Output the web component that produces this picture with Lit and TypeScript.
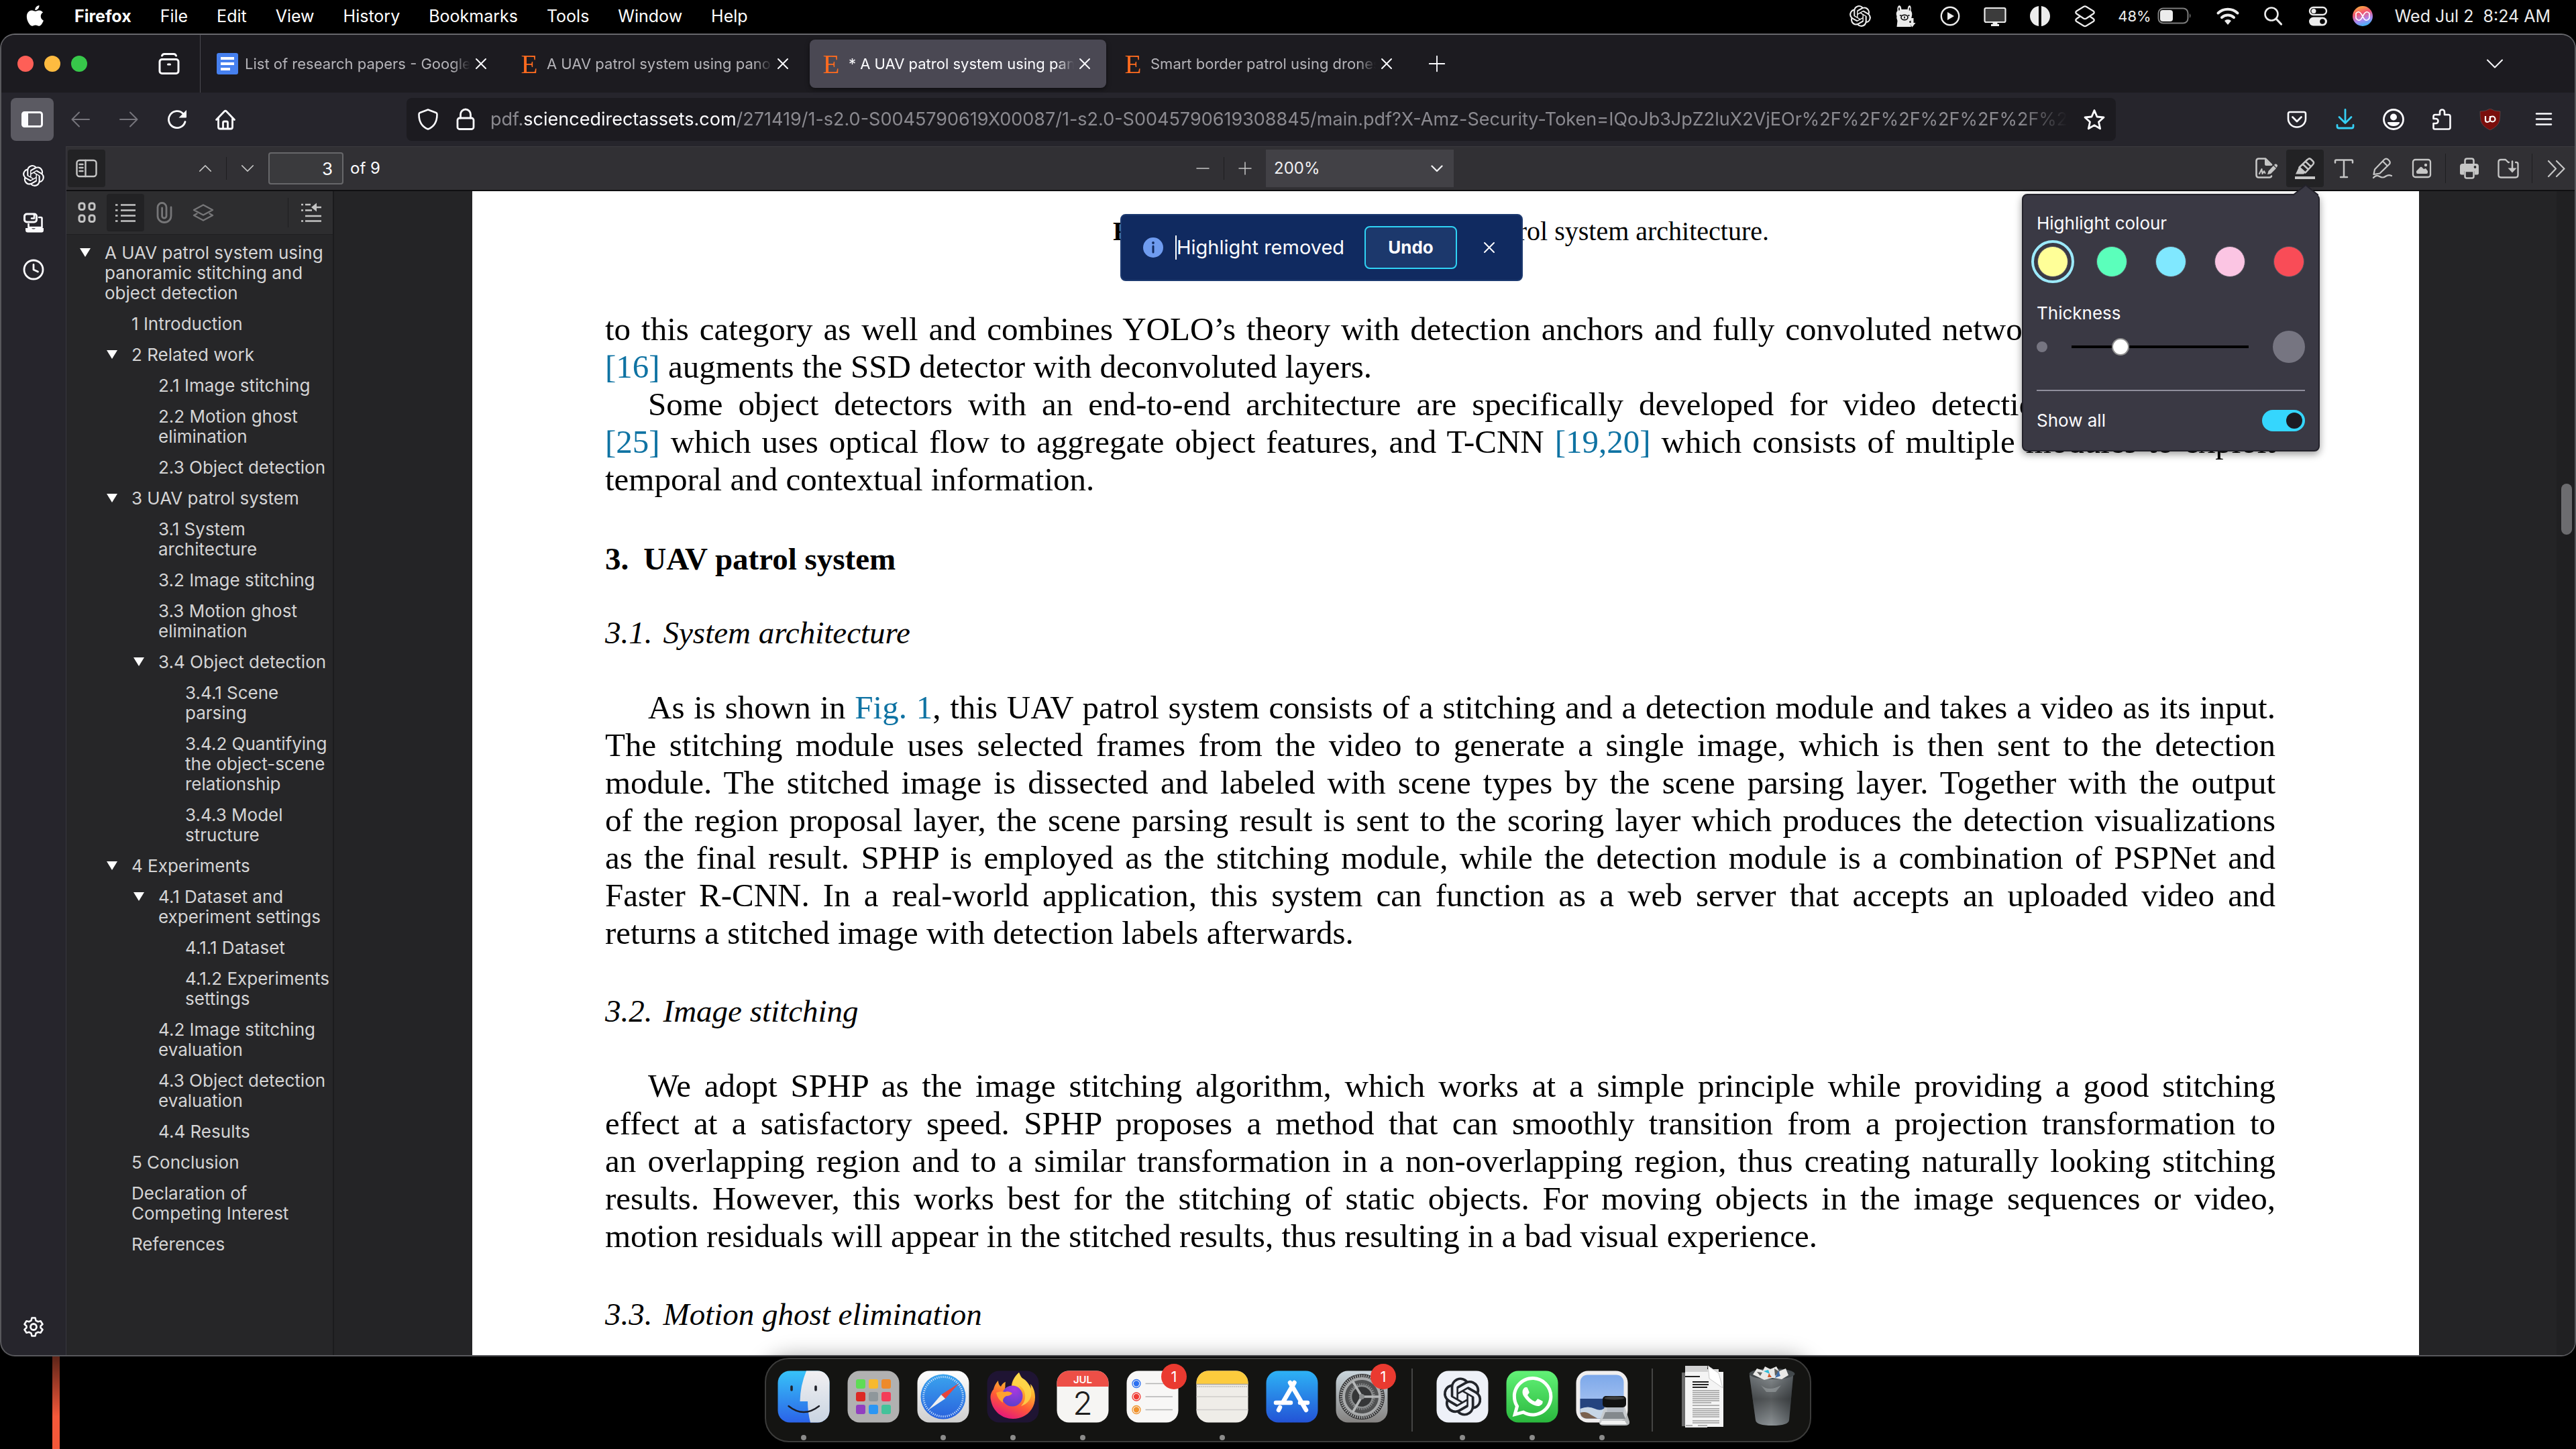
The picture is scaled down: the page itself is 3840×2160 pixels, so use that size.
import { LitElement, html, svg, css, nothing, TemplateResult, SVGTemplateResult } from "lit";
import { customElement } from "lit/decorators.js";
import { classMap } from "lit/directives/class-map.js";

const OPENAI = "M22.2819 9.8211a5.9847 5.9847 0 0 0-.5157-4.9108 6.0462 6.0462 0 0 0-6.5098-2.9A6.0651 6.0651 0 0 0 4.9807 4.1818a5.9847 5.9847 0 0 0-3.9977 2.9 6.0462 6.0462 0 0 0 .7427 7.0966 5.98 5.98 0 0 0 .511 4.9107 6.051 6.051 0 0 0 6.5146 2.9001A5.9847 5.9847 0 0 0 13.2599 24a6.0557 6.0557 0 0 0 5.7718-4.2058 5.9894 5.9894 0 0 0 3.9977-2.9001 6.0557 6.0557 0 0 0-.7475-7.0729zm-9.022 12.6081a4.4755 4.4755 0 0 1-2.8764-1.0408l.1419-.0804 4.7783-2.7582a.7948.7948 0 0 0 .3927-.6813v-6.7369l2.02 1.1686a.071.071 0 0 1 .038.052v5.5826a4.504 4.504 0 0 1-4.4945 4.4944zm-9.6607-4.1254a4.4708 4.4708 0 0 1-.5346-3.0137l.142.0852 4.783 2.7582a.7712.7712 0 0 0 .7806 0l5.8428-3.3685v2.3324a.0804.0804 0 0 1-.0332.0615L9.74 19.9502a4.4992 4.4992 0 0 1-6.1408-1.6464zM2.3408 7.8956a4.485 4.485 0 0 1 2.3655-1.9728V11.6a.7664.7664 0 0 0 .3879.6765l5.8144 3.3543-2.0201 1.1685a.0757.0757 0 0 1-.071 0l-4.8303-2.7865A4.504 4.504 0 0 1 2.3408 7.872zm16.5963 3.8558L13.1038 8.364 15.1192 7.2a.0757.0757 0 0 1 .071 0l4.8303 2.7913a4.4944 4.4944 0 0 1-.6765 8.1042v-5.6772a.79.79 0 0 0-.407-.667zm2.0107-3.0231l-.142-.0852-4.7735-2.7818a.7759.7759 0 0 0-.7854 0L9.409 9.2297V6.8974a.0662.0662 0 0 1 .0284-.0615l4.8303-2.7866a4.4992 4.4992 0 0 1 6.6802 4.66zM8.3065 12.863l-2.02-1.1638a.0804.0804 0 0 1-.038-.0567V6.0742a4.4992 4.4992 0 0 1 7.3757-3.4537l-.142.0805L8.704 5.459a.7948.7948 0 0 0-.3927.6813zm1.0976-2.3654l2.602-1.4998 2.6069 1.4998v2.9994l-2.5974 1.4997-2.6067-1.4997Z";
const APPLE = "M12.152 6.896c-.948 0-2.415-1.078-3.96-1.04-2.04.027-3.91 1.183-4.961 3.014-2.117 3.675-.546 9.103 1.519 12.09 1.013 1.454 2.208 3.09 3.792 3.039 1.52-.065 2.09-.987 3.935-.987 1.831 0 2.35.987 3.96.948 1.637-.026 2.676-1.48 3.676-2.948 1.156-1.688 1.636-3.325 1.662-3.415-.039-.013-3.182-1.221-3.22-4.857-.026-3.04 2.48-4.494 2.597-4.559-1.429-2.09-3.623-2.324-4.39-2.376-2-.156-3.675 1.09-4.61 1.09zM15.53 3.83c.843-1.012 1.4-2.427 1.245-3.83-1.207.052-2.662.805-3.532 1.818-.78.896-1.454 2.338-1.273 3.714 1.338.104 2.715-.688 3.559-1.701";
const WHATSAPP = "M17.472 14.382c-.297-.149-1.758-.867-2.03-.967-.273-.099-.471-.148-.67.15-.197.297-.767.966-.94 1.164-.173.199-.347.223-.644.075-.297-.15-1.255-.463-2.39-1.475-.883-.788-1.48-1.761-1.653-2.059-.173-.297-.018-.458.13-.606.134-.133.298-.347.446-.52.149-.174.198-.298.298-.497.099-.198.05-.371-.025-.52-.075-.149-.669-1.612-.916-2.207-.242-.579-.487-.5-.669-.51-.173-.008-.371-.01-.57-.01-.198 0-.52.074-.792.372-.272.297-1.04 1.016-1.04 2.479 0 1.462 1.065 2.875 1.213 3.074.149.198 2.096 3.2 5.077 4.487.709.306 1.262.489 1.694.625.712.227 1.36.195 1.871.118.571-.085 1.758-.719 2.006-1.413.248-.694.248-1.289.173-1.413-.074-.124-.272-.198-.57-.347m-5.421 7.403h-.004a9.87 9.87 0 01-5.031-1.378l-.361-.214-3.741.982.998-3.648-.235-.374a9.86 9.86 0 01-1.51-5.26c.001-5.45 4.436-9.884 9.888-9.884 2.64 0 5.122 1.03 6.988 2.898a9.825 9.825 0 012.893 6.994c-.003 5.45-4.437 9.884-9.885 9.884m8.413-18.297A11.815 11.815 0 0012.05 0C5.495 0 .16 5.335.157 11.892c0 2.096.547 4.142 1.588 5.945L.057 24l6.305-1.654a11.882 11.882 0 005.683 1.448h.005c6.554 0 11.89-5.335 11.893-11.893a11.821 11.821 0 00-3.48-8.413Z";

/** Line icons on a 32-unit grid, stroked in the current colour. */
const glyphs: Record<string, SVGTemplateResult> = {
  apple: svg`<path transform="translate(1 0) scale(1.28)" fill="currentColor" stroke="none" d=${APPLE}/>`,
  openai: svg`<path transform="scale(1.33)" fill="currentColor" stroke="none" d=${OPENAI}/>`,
  llama: svg`<path fill="currentColor" stroke="none" d="M7 0q3 0 3.500 6h9Q20 0 23 0q2.500 2 1.500 8 2.500 3 1.500 7.500-1 3.500-1 7L22 24l3 8H3.500l1-9q-2-4-1-7-2-4.500 1-8-1-6 2.500-8z"/><g stroke="#000" stroke-width="1.600"><ellipse cx="15" cy="18" rx="5" ry="3.800"/><path d="M8.500 15h1.500M20.500 15h1.500M15 17v2M7 4v3M22.500 4v3"/></g><path stroke-width="4" stroke-linecap="butt" d="M26.500 19v8"/><path fill="currentColor" stroke="none" d="M21.500 26h10l-5 6.500z"/>`,
  play: svg`<circle cx="16" cy="16" r="13.200" stroke-width="2.400"/><path fill="currentColor" stroke="none" d="M12 10v12l10-6z"/>`,
  display: svg`<rect x=".5" y="4" width="31" height="21" rx="2" fill="#3c3c3c" stroke-width="2.200"/><path fill="currentColor" stroke="none" d="M12.500 25h7v3h2.500v3H10v-3h2.500z"/>`,
  halves: svg`<path fill="currentColor" stroke="none" d="M14 1v30C6 30 1 23 1 16S6 2 14 1zM18 1v30c8-1 13-8 13-15S26 2 18 1z"/>`,
  stack: svg`<path stroke-width="2.300" d="M14 2 3.500 8.500q-2.500 2 0 4L14 19.500q2 1.200 4 0l10.500-7q2.500-2 0-4L18 2q-2-1.200-4 0zM8.500 16.500 3.500 20q-2.500 2 0 4L14 30.500q2 1.200 4 0L28.500 24q2.500-2 0-4l-5-3.500"/>`,
  wifi: svg`<g stroke-width="4"><path d="M1.500 11.500a21 21 0 0 1 29 0"/><path d="M7 18a13 13 0 0 1 18 0"/></g><path fill="currentColor" stroke="none" d="M11 23a7 7 0 0 1 10 0l-5 6z"/>`,
  search: svg`<circle cx="14" cy="13" r="9.500" stroke-width="2.600"/><path stroke-width="3.200" d="m21 20 7.500 8"/>`,
  control: svg`<rect x="4" y="3" width="25" height="11" rx="5.500" stroke-width="2.400"/><circle cx="10" cy="8.500" r="3.500" fill="currentColor" stroke="none"/><rect x="3" y="17.500" width="27" height="13" rx="6.500" fill="currentColor" stroke="none"/><circle cx="23" cy="24" r="3.800" fill="#000" stroke="none"/>`,
  box: svg`<g stroke-width="3"><rect x="2" y="9.500" width="28" height="21" rx="3.500"/><path d="M5.500 4q1-2.500 3.500-2.500h14Q25.500 1.500 26.500 4"/></g><path stroke-width="3" d="M14.500 17h3"/>`,
  close: svg`<path d="m9 9 14 14M23 9 9 23"/>`,
  plus: svg`<path d="M16 4v24M4 16h24"/>`,
  minus: svg`<path d="M4 16h24"/>`,
  down: svg`<path d="m5 10.500 11 11 11-11"/>`,
  up: svg`<path d="m5 21.500 11-11 11 11"/>`,
  caret: svg`<path stroke-width="2.300" d="m8.500 12.500 7.500 7.500 7.500-7.500"/>`,
  sidebar: svg`<rect x="1.500" y="5.500" width="29" height="21" rx="3" stroke-width="3"/><path stroke="none" fill="currentColor" d="M2 6h8v20H2z"/>`,
  back: svg`<path d="M29 16H4M14 5.500 3.500 16 14 26.500"/>`,
  forward: svg`<path d="M3 16h25M18 5.500 28.500 16 18 26.500"/>`,
  reload: svg`<path stroke-width="2.800" d="M28 19.500A12.500 12.500 0 1 1 25 7.500"/><path fill="currentColor" stroke="none" d="M30 2v10.500q0 1-1 1H18.500z"/>`,
  home: svg`<path stroke-width="2.800" d="M2.500 16.500 14.500 4q1.500-1.500 3 0l12 12.500M5.500 14.500v13q0 2.500 2.500 2.500h16q2.500 0 2.500-2.500v-13M12.500 30v-9q0-2 2-2h3q2 0 2 2v9"/>`,
  shield: svg`<path stroke-width="2.600" d="M16 1.500 28 6q1.500.5 1.500 2.500C29.500 19 25 27 16 30.500 7 27 2.500 19 2.500 8.500Q2.500 6.500 4 6z"/>`,
  lock: svg`<rect x="4" y="14" width="24" height="16.500" rx="3" stroke-width="2.800"/><path stroke-width="2.800" d="M8.500 14V8.500a7.500 7.500 0 0 1 15 0V14"/>`,
  star: svg`<path stroke-width="2.800" d="m16 2.500 4 9.500 10 1-7.500 6.800 2.200 10L16 24.600 7.300 29.800l2.200-10L2 13l10-1z"/>`,
  pocket: svg`<path stroke-width="2.600" d="M5.500 5h21q2.500 0 2.500 2.500V15a13 12.500 0 0 1-26 0V7.500Q3 5 5.500 5z"/><path stroke-width="2.800" d="m9.500 12.500 6.500 6.500 6.500-6.500"/>`,
  download: svg`<path stroke-width="2.800" d="M16 1.500v19M7 12.500l9 9 9-9M4 24.500v2Q4 29 6.500 29h19q2.500 0 2.500-2.500v-2"/>`,
  account: svg`<circle cx="16" cy="16" r="14.500" stroke-width="2.800"/><circle cx="16" cy="12.500" r="5" fill="currentColor" stroke="none"/><path fill="currentColor" stroke="none" d="M8 20h16q1.500 0 1 1.500Q22 26 16 26t-9-4.500Q6.500 20 8 20z"/>`,
  puzzle: svg`<path stroke-width="2.600" d="M13 9V5a3.500 3.500 0 0 1 7 0v4h6q2.500 0 2.500 2.500V28q0 2.500-2.500 2.500H5.500q-2 0-2-2V22H7a3.500 3.500 0 0 0 0-7H3.500v-3.500Q3.500 9 6 9z"/>`,
  menu: svg`<path stroke-width="2.600" d="M5 7.500h22M5 15.500h22M5 23.500h22"/>`,
  panel: svg`<rect x="1.500" y="4" width="29" height="24" rx="4" stroke-width="2.400"/><path stroke-width="2.400" d="M14.500 4v24M5.500 10h5M5.500 15h5M5.500 20h5"/>`,
  sign: svg`<path stroke-width="2.600" d="M24 27.500q-.5 2-3 2H5q-3.500 0-3.500-3.500V5Q1.500 1.500 5 1.500h10l9 9"/><path fill="currentColor" stroke="none" d="M14 2v8q0 2 2 2h8zM18 25l1.500-5L27 12l4 4-8 8zM28 11l1.500-1.500q2-.5 3 1t.500 2L31.500 15z"/><path d="m6 24 3.500-7 1 7 2.500-4 1.500 3"/>`,
  highlighter: svg`<path stroke-width="2.500" d="M19.500 3 21 2q2-1.500 4 .5l3 3q2 2 0 4.500L16.500 22.500l-9-8zM12.500 9.500l8.500 8M16.500 5.500l8.500 8"/><path fill="currentColor" stroke="none" d="m7 14 9 8.500-2 2H2z"/><path stroke-width="4" d="M1 30h30" stroke-linecap="butt"/>`,
  text: svg`<path stroke-width="2.500" d="M3 7.500V5q0-1.500 1.500-1.500h23Q29 3.500 29 5v2.500M16 3.500V28M11 29h10"/>`,
  draw: svg`<path stroke-width="2.200" d="M2.500 25 4 17.500 18 3q2.500-2.500 5.500-.5l2 2q2.500 3 0 5.500L11.500 23.500zM16 5.500l7 7M2 30q4-5 9-2t9 0 9-1"/>`,
  image: svg`<rect x="3" y="3" width="26" height="26" rx="3.500" stroke-width="2.300"/><path fill="currentColor" stroke="none" d="m8 20 6-6q1-.5 2 0l3 3 3-1 3 4v2q0 2-2 2H10q-2 0-2-2z"/><circle cx="22" cy="11" r="2.200" fill="currentColor" stroke="none"/>`,
  print: svg`<path fill="currentColor" stroke="none" d="M6 9h20q4 0 4 4v10q0 2.500-2.500 2.500H24V20H8v5.500H4.500Q2 25.500 2 23V13q0-4 4-4z"/><path stroke-width="2.500" d="M9.500 9V4.500q0-3 3-3h7q3 0 3 3V9M9.500 20v8q0 2.500 2.500 2.500h8q2.500 0 2.500-2.500v-8z"/><circle cx="24.500" cy="14" r="1.900" fill="#2c2c2e" stroke="none"/>`,
  save: svg`<path stroke-width="2.300" d="M27 7h1q2.500 0 2.500 2.500V26q0 3.500-3.500 3.500H5q-3.500 0-3.500-3.500V6.500Q1.500 3 5 3h7l4 4h1"/><path stroke-width="2.500" d="M22 5.500V17"/><path fill="currentColor" stroke="none" d="M15.500 15.500h13L22 22.500z"/>`,
  more: svg`<path stroke-width="2.200" d="M5 5l11 11.500L5 28M17 5l11.500 11.500L17 28"/>`,
  thumbs: svg`<g stroke-width="3"><rect x="5" y="2" width="8" height="9.500" rx="3"/><rect x="20" y="2" width="8" height="9.500" rx="3"/><rect x="5" y="20" width="8" height="9.500" rx="3"/><rect x="20" y="20" width="8" height="9.500" rx="3"/></g>`,
  outline: svg`<path stroke-width="2.600" d="M9 4.500h22M9 12.500h22M9 20.500h22M9 28.500h22" stroke-linecap="butt"/><path stroke-width="2.600" stroke-linecap="butt" d="M1 4.500h3.500M1 12.500h3.500M1 20.500h3.500M1 28.500h3.500"/>`,
  clip: svg`<path stroke-width="2.800" d="M26 8v13a10 9.500 0 0 1-20 0V8a6.500 6.500 0 0 1 13 0v13a3.200 3.200 0 0 1-6.400 0V9"/>`,
  layers: svg`<path stroke-width="2.400" d="M16 4.500 30 12l-14 7.500L2 12zM6.500 17.500 2 20l14 7.500L30 20l-4.500-2.500"/>`,
  locate: svg`<path stroke-width="2.600" stroke-linecap="butt" d="M7 4h8M7 12.500h10M7 21h24M7 28.500h24M1 4h3M1 12.500h3M7 21h3M1 28.500h3M20 8h11"/><path fill="currentColor" stroke="none" d="M16 8l8-6.500v13z"/>`,
  devices: svg`<rect x="2.500" y="3" width="18" height="12" rx="3.500" stroke-width="3"/><path stroke-width="2.600" d="M17 3.500v6h-4M24 8h3q1.500 0 1.500 1.500V23h-20v-5"/><path fill="currentColor" stroke="none" d="M4 24h9q1 1.500 3 1.500T19 24h12v3q0 3.500-3 3.500H7.500Q4 30.500 4 27z"/>`,
  clock: svg`<circle cx="16" cy="16" r="14" stroke-width="2.800"/><path stroke-width="2.800" d="M16 8.500V16l6.500 3"/>`,
  gear: svg`<path stroke-width="2.600" d="M13.500 2.500h5l1 4 3 1.700 4-1 3 4.800-3 2.700v2.600l3 2.700-3 4.800-4-1-3 1.700-1 4h-5l-1-4-3-1.700-4 1-3-4.800 3-2.700v-2.600l-3-2.700 3-4.800 4 1 3-1.700z"/><circle cx="16" cy="16" r="4.500" stroke-width="2.800"/>`,
};

const icon = (name: string, cls = "") => html`<svg class="icon ${cls}" viewBox="0 0 32 32" aria-hidden="true">${glyphs[name]}</svg>`;

interface OutlineItem { level: number; text: string; open?: boolean }
const outline: OutlineItem[] = [
  { level: 0, text: "A UAV patrol system using panoramic stitching and object detection", open: true },
  { level: 1, text: "1 Introduction" },
  { level: 1, text: "2 Related work", open: true },
  { level: 2, text: "2.1 Image stitching" },
  { level: 2, text: "2.2 Motion ghost elimination" },
  { level: 2, text: "2.3 Object detection" },
  { level: 1, text: "3 UAV patrol system", open: true },
  { level: 2, text: "3.1 System architecture" },
  { level: 2, text: "3.2 Image stitching" },
  { level: 2, text: "3.3 Motion ghost elimination" },
  { level: 2, text: "3.4 Object detection", open: true },
  { level: 3, text: "3.4.1 Scene parsing" },
  { level: 3, text: "3.4.2 Quantifying the object-scene relationship" },
  { level: 3, text: "3.4.3 Model structure" },
  { level: 1, text: "4 Experiments", open: true },
  { level: 2, text: "4.1 Dataset and experiment settings", open: true },
  { level: 3, text: "4.1.1 Dataset" },
  { level: 3, text: "4.1.2 Experiments settings" },
  { level: 2, text: "4.2 Image stitching evaluation" },
  { level: 2, text: "4.3 Object detection evaluation" },
  { level: 2, text: "4.4 Results" },
  { level: 1, text: "5 Conclusion" },
  { level: 1, text: "Declaration of Competing Interest" },
  { level: 1, text: "References" },
];

const ref = (label: string) => html`<a class="cite" href="#${label}">${label}</a>`;

type Line = string | TemplateResult;
const related: Line[] = [
  "to this category as well and combines YOLO’s theory with detection anchors and fully convoluted networks. Finally, DSSD",
  html`${ref("[16]")} augments the SSD detector with deconvoluted layers.`,
];
const video: Line[] = [
  "Some object detectors with an end-to-end architecture are specifically developed for video detection, such as FGFA",
  html`${ref("[25]")} which uses optical flow to aggregate object features, and T-CNN ${ref("[19,20]")} which consists of multiple modules to exploit`,
  "temporal and contextual information.",
];
const architecture: Line[] = [
  html`As is shown in ${ref("Fig. 1")}, this UAV patrol system consists of a stitching and a detection module and takes a video as its input.`,
  "The stitching module uses selected frames from the video to generate a single image, which is then sent to the detection",
  "module. The stitched image is dissected and labeled with scene types by the scene parsing layer. Together with the output",
  "of the region proposal layer, the scene parsing result is sent to the scoring layer which produces the detection visualizations",
  "as the final result. SPHP is employed as the stitching module, while the detection module is a combination of PSPNet and",
  "Faster R-CNN. In a real-world application, this system can function as a web server that accepts an uploaded video and",
  "returns a stitched image with detection labels afterwards.",
];
const stitching: Line[] = [
  "We adopt SPHP as the image stitching algorithm, which works at a simple principle while providing a good stitching",
  "effect at a satisfactory speed. SPHP proposes a method that can smoothly transition from a projection transformation to",
  "an overlapping region and to a similar transformation in a non-overlapping region, thus creating naturally looking stitching",
  "results. However, this works best for the stitching of static objects. For moving objects in the image sequences or video,",
  "motion residuals will appear in the stitched results, thus resulting in a bad visual experience.",
];

const base = css`
  * { box-sizing: border-box; }
  button, input, select { font: inherit; color: inherit; margin: 0; border: 0; padding: 0; background: none; }
  button { display: flex; align-items: center; justify-content: center; }
  a { color: inherit; text-decoration: none; }
  .icon { width: 32px; height: 32px; flex: none; display: block; overflow: visible; fill: none; stroke: currentColor; stroke-width: 2; stroke-linecap: round; stroke-linejoin: round; }
`;

@customElement("menu-bar")
export class MenuBar extends LitElement {
  static styles = [base, css`
    :host { display: flex; align-items: center; height: 50px; flex: none; padding: 0 38px 2px 36px; background: #000; color: #fff; font-size: 25px; line-height: 32px; }
    nav { display: flex; align-items: center; gap: 43px; }
    .brand { font-weight: 700; }
    .status { margin-left: auto; display: flex; align-items: center; color: #ececec; }
    .cell { width: 67px; display: flex; justify-content: center; }
    .power { display: flex; align-items: center; gap: 9px; margin: 0 20px 0 16px; font-size: 22px; }
    .battery { width: 52px; height: 26px; display: block; }
    .siri { width: 32px; height: 32px; display: block; }
    .clock { margin-left: 14px; white-space: pre; }
  `];
  render() {
    return html`
      <nav aria-label="Menu bar">
        ${icon("apple")}
        <button class="brand">Firefox</button>
        ${["File", "Edit", "View", "History", "Bookmarks", "Tools", "Window", "Help"].map((m) => html`<button>${m}</button>`)}
      </nav>
      <div class="status">
        ${["openai", "llama", "play", "display", "halves", "stack"].map((n) => html`<span class="cell">${icon(n)}</span>`)}
        <span class="power">48%
          <svg class="battery" viewBox="0 0 52 26" aria-hidden="true"><rect x="1.500" y="1.500" width="44" height="22" rx="7" fill="none" stroke="#7d7d7d" stroke-width="2"/><rect x="4" y="4" width="19" height="17" rx="4" fill="#ececec"/><path d="M48 9q3 3.500 0 7z" fill="#7d7d7d"/></svg>
        </span>
        ${["wifi", "search", "control"].map((n) => html`<span class="cell">${icon(n)}</span>`)}
        <span class="cell">
          <svg class="siri" viewBox="0 0 32 32" aria-hidden="true">
            <defs><linearGradient id="sa" x1=".3" y1="0" x2=".6" y2="1"><stop offset="0" stop-color="#ffae3d"/><stop offset=".35" stop-color="#f2556f"/><stop offset=".7" stop-color="#a98bf5"/><stop offset="1" stop-color="#38b6f6"/></linearGradient></defs>
            <circle cx="16" cy="16" r="15" fill="url(#sa)"/>
            <path d="M6 12q4-5 8 1l4 7q4 5 8-1V12q-4-5-8 1l-4 7q-4 5-8-1z" fill="none" stroke="#fff" stroke-width="1.600"/>
          </svg>
        </span>
        <span class="clock">Wed Jul 2  8:24 AM</span>
      </div>`;
  }
}

interface Tab { title: string; docs?: boolean; active?: boolean }
const tabs: Tab[] = [
  { title: "List of research papers - Google Docs", docs: true },
  { title: "A UAV patrol system using panoramic stitching" },
  { title: "* A UAV patrol system using panoramic stitching", active: true },
  { title: "Smart border patrol using drones" },
];

@customElement("browser-chrome")
export class BrowserChrome extends LitElement {
  static styles = [base, css`
    :host { display: block; flex: none; color: #fbfbfe; }
    .tabstrip { display: flex; align-items: center; height: 86px; background: #1c1b20; padding-right: 90px; }
    .lights { display: flex; gap: 16px; padding-left: 24px; width: 234px; }
    .light { width: 24px; height: 24px; border-radius: 50%; }
    .red { background: #fe5f57; } .amber { background: #febb40; } .green { background: #37c84a; }
    .divider { width: 1px; align-self: stretch; background: #4a4950; margin-left: 30px; margin-right: 8px; }
    .tabs { display: flex; gap: 8px; }
    .tab { width: 442px; height: 72px; border-radius: 8px; display: flex; align-items: center; padding: 0 16px; }
    .tab.active { background: #4a4853; box-shadow: 0 2px 6px rgba(0, 0, 0, .5); }
    .label { display: flex; justify-content: flex-start; gap: 10px; flex: 1; min-width: 0; height: 48px; overflow: hidden; white-space: nowrap; font-size: 22px; line-height: 32px; color: #b4b3b8; -webkit-mask-image: linear-gradient(90deg, #000 93%, transparent); mask-image: linear-gradient(90deg, #000 93%, transparent); }
    .active .label { color: #fbfbfe; }
    .fav { width: 32px; height: 32px; flex: none; }
    .e { width: 32px; flex: none; font: 41px/40px "Liberation Serif", serif; color: #ff6b1f; }
    .close { width: 32px; height: 32px; }
    .new { width: 64px; height: 64px; margin-left: 11px; }
    .new .icon { width: 30px; height: 30px; }
    .list { margin-left: auto; width: 58px; height: 58px; }
    .nav { display: flex; align-items: center; height: 80px; background: #26252c; padding: 0 14px; }
    .tool { width: 64px; height: 64px; margin-right: 8px; border-radius: 8px; }
    .on { background: #5b5a62; }
    .off { color: #76757c; }
    .url { flex: 1; min-width: 0; display: flex; align-items: center; gap: 24px; height: 64px; margin: 0 238px 0 230px; padding: 0 16px; background: #1c1b20; border-radius: 8px; font-size: 27px; line-height: 40px; }
    .address { flex: 1; min-width: 0; margin-left: -3px; overflow: hidden; white-space: nowrap; color: #8b8a90; -webkit-mask-image: linear-gradient(90deg, #000 97%, transparent); mask-image: linear-gradient(90deg, #000 97%, transparent); outline: none; }
    .address b { font-weight: 400; color: #fbfbfe; }
    .end { display: flex; gap: 8px; }
    .end .tool { margin: 0; }
    .end .tool:last-child { margin-left: 8px; }
    .blue { color: #35d0f5; }
    .ublock { width: 32px; height: 32px; }
  `];
  render() {
    return html`
      <div class="tabstrip">
        <div class="lights"><span class="light red"></span><span class="light amber"></span><span class="light green"></span></div>
        <button aria-label="View tabs">${icon("box")}</button>
        <span class="divider"></span>
        <div class="tabs">
          ${tabs.map((t) => html`
            <div class=${classMap({ tab: true, active: !!t.active })}>
              <button class="label">
                ${t.docs
                  ? html`<svg class="fav" viewBox="0 0 32 32" aria-hidden="true"><rect width="32" height="32" rx="3" fill="#4680ef"/><path d="M6 8h20M6 16h20M6 24h14" stroke="#fff" stroke-width="4"/></svg>`
                  : html`<span class="e">E</span>`}
                <span>${t.title}</span>
              </button>
              <button class="close" aria-label="Close tab">${icon("close")}</button>
            </div>`)}
        </div>
        <button class="new" aria-label="New tab">${icon("plus")}</button>
        <button class="list" aria-label="List all tabs">${icon("down")}</button>
      </div>
      <div class="nav">
        <button class="tool on" aria-label="Sidebar">${icon("sidebar")}</button>
        <button class="tool off" aria-label="Back">${icon("back")}</button>
        <button class="tool off" aria-label="Forward">${icon("forward")}</button>
        <button class="tool" aria-label="Reload">${icon("reload")}</button>
        <button class="tool" aria-label="Home">${icon("home")}</button>
        <div class="url">
          ${icon("shield")}${icon("lock")}
          <div class="address" role="textbox" aria-label="Address" tabindex="0">pdf.<b>sciencedirectassets.com</b>/271419/1-s2.0-S0045790619X00087/1-s2.0-S0045790619308845/main.pdf?X-Amz-Security-Token=IQoJb3JpZ2luX2VjEOr%2F%2F%2F%2F%2F%2F%2F%2F%2F%2F</div>
          ${icon("star")}
        </div>
        <div class="end">
          <button class="tool" aria-label="Pocket">${icon("pocket")}</button>
          <button class="tool blue" aria-label="Downloads">${icon("download")}</button>
          <button class="tool" aria-label="Account">${icon("account")}</button>
          <button class="tool" aria-label="Extensions">${icon("puzzle")}</button>
          <button class="tool" aria-label="uBlock">
            <svg class="ublock" viewBox="0 0 32 32" aria-hidden="true"><path d="M16 0Q22 4 31 4 31 12 30 18 28 26 16 32 4 26 2 18 1 12 1 4 10 4 16 0z" fill="#7a0e0c" stroke="#6a5a5c" stroke-width=".600"/><path d="M9 11v6q0 3 3 3 2.500 0 4-2.500V11" fill="none" stroke="#fff" stroke-width="2.200"/><circle cx="19.500" cy="15.500" r="4" fill="none" stroke="#fff" stroke-width="2.200"/></svg>
          </button>
          <button class="tool" aria-label="Menu">${icon("menu")}</button>
        </div>
      </div>`;
  }
}

@customElement("highlight-panel")
export class HighlightPanel extends LitElement {
  static styles = [base, css`
    :host { display: block; width: 444px; padding: 20px; border: 2px solid #23222b; border-radius: 8px; background: #3a3944; color: #fbfbfe; font-size: 26px; line-height: 32px; box-shadow: 0 4px 12px rgba(0, 0, 0, .4); }
    .tip { position: absolute; right: 0; top: -17px; width: 38px; height: 19px; display: block; }
    .title { display: block; padding-top: 6px; }
    .swatches { display: flex; justify-content: space-between; padding: 9px 0 0; margin: 0 -8px; }
    .swatch { width: 64px; height: 64px; border-radius: 50%; border: 4px solid transparent; }
    .swatch.on { border-color: #9ceafc; }
    .dot { width: 46px; height: 46px; border-radius: 50%; border: 1px solid #54535e; background: var(--ink); }
    .thick { padding-top: 29px; }
    .slider { display: flex; align-items: center; justify-content: space-between; padding: 10px 0 40px; }
    .small { width: 16px; height: 16px; border-radius: 50%; background: #767581; }
    .big { width: 48px; height: 48px; border-radius: 50%; background: #767581; }
    input[type="range"] { -webkit-appearance: none; appearance: none; width: 264px; height: 26px; margin: 0; background: linear-gradient(#000, #000) center / 100% 4px no-repeat; }
    input[type="range"]::-webkit-slider-thumb { -webkit-appearance: none; width: 26px; height: 26px; border-radius: 50%; background: #fff; border: 2px solid #8f8f8f; }
    .row { display: flex; align-items: center; justify-content: space-between; border-top: 2px solid #8f8e9c; padding: 28px 0 8px; }
    .toggle { -webkit-appearance: none; appearance: none; display: flex; justify-content: flex-end; width: 64px; height: 32px; border-radius: 16px; padding: 4px; background: #35d6fd; }
    .toggle::before { content: ""; width: 24px; height: 24px; border-radius: 50%; background: #1c1b22; }
  `];
  render() {
    const inks = [["Yellow", "#ffff98"], ["Green", "#5bffbb"], ["Blue", "#80e8ff"], ["Pink", "#fbc5e3"], ["Red", "#f94c57"]];
    return html`
      <svg class="tip" viewBox="0 0 38 19" aria-hidden="true"><path d="M0 17 19 2 38 17v2H0z" fill="#3a3944"/><path d="M0 17 19 2 38 17" fill="none" stroke="#23222b" stroke-width="2"/></svg>
      <span class="title">Highlight colour</span>
      <div class="swatches">
        ${inks.map(([name, ink], i) => html`<button class=${classMap({ swatch: true, on: i === 0 })} aria-label=${name}><span class="dot" style="--ink:${ink}"></span></button>`)}
      </div>
      <label class="title thick" for="thickness">Thickness</label>
      <div class="slider"><span class="small"></span><input id="thickness" type="range" min="8" max="24" value="12"><span class="big"></span></div>
      <div class="row"><label for="all">Show all</label><input id="all" class="toggle" type="checkbox" checked></div>`;
  }
}

@customElement("pdf-viewer")
export class PdfViewer extends LitElement {
  static styles = [base, css`
    :host { display: flex; flex-direction: column; flex: 1; min-width: 0; min-height: 0; border-left: 1px solid #38373f; color: #fbfbfe; position: relative; }
    .bar { display: grid; grid-template-columns: 1fr auto 1fr; align-items: center; height: 67px; flex: none; background: #313034; border-top: 1px solid #3b3a3f; border-bottom: 2px solid #0f0f11; font-size: 26px; line-height: 32px; color: #c6c6c6; }
    .part { display: flex; align-items: center; gap: 2px; }
    .left { padding-left: 2px; }
    .middle { padding-right: 6px; font-size: 24px; }
    .right { justify-content: flex-end; }
    .btn { width: 56px; height: 56px; border-radius: 4px; }
    .btn.on { background: #222224; }
    .first { margin-right: 118px; }
    .slim { width: 58px; }
    .slim .icon { width: 24px; height: 24px; }
    .rule { width: 1px; height: 34px; background: #1e1e20; flex: none; }
    .tall { height: 44px; margin: 0 5px; }
    .page { width: 112px; height: 48px; border: 2px solid #67676a; border-radius: 4px; background: #3a3a3d; color: #fbfbfe; text-align: right; padding-right: 14px; }
    .count { color: #fbfbfe; margin-left: 8px; font-size: 24px; }
    .zoom { position: relative; display: flex; align-items: center; color: #f0f0f2; }
    .zoom select { -webkit-appearance: none; appearance: none; width: 280px; height: 56px; padding-left: 12px; background: #424146; }
    .zoom .icon { position: absolute; right: 9px; pointer-events: none; }
    .body { display: flex; flex: 1; min-height: 0; }
    .side { width: 399px; flex: none; display: flex; flex-direction: column; background: #262628; border-right: 2px solid #1b1b1d; }
    .views { display: flex; align-items: center; gap: 2px; height: 65px; flex: none; padding: 0 4px 0 2px; background: #2d2d2f; border-bottom: 1px solid #1e1e20; color: #c3c3c3; }
    .views .rule { margin-left: auto; height: 44px; margin-right: 4px; }
    .dim { color: #767678; }
    .tree { list-style: none; margin: 0; padding: 4px 2px 0 0; font-size: 26px; line-height: 30px; color: #d4d4d5; }
    .node { display: flex; align-items: flex-start; padding: 8px 0; padding-left: calc(17px + var(--level) * 40px); }
    .twist { width: 40px; height: 30px; flex: none; justify-content: flex-start; padding-left: 2px; }
    .twist svg { width: 18px; height: 14px; fill: #fff; display: block; }
    .desk { flex: 1; min-width: 0; overflow: hidden; position: relative; display: flex; background: #242426; }
    .sheet { flex: 1; min-width: 0; margin: 0 232px 0 206px; background: #fff; color: #000; padding: 32px 214px 0 198px; font: 49px/56px "Liberation Serif", serif; overflow: hidden; }
    .caption { display: flex; justify-content: space-between; width: 978px; margin: 0 auto 90px 757px; font-size: 40px; line-height: 56px; }
    p { margin: 0; }
    .line { display: block; white-space: nowrap; text-align-last: justify; }
    .line:last-child { text-align-last: left; }
    .indent .line:first-child { padding-left: 64px; }
    .spread .line { text-align-last: justify; }
    h2, h3 { display: flex; font-size: 47px; line-height: inherit; }
    h2 { gap: 22px; margin: 62px 0 54px; }
    h3 { gap: 16px; margin: 60px 0 56px; font-weight: 400; font-style: italic; }
    h2 + h3 { margin-top: 0; }
    .cite { color: #0f73a3; }
    .track { position: absolute; right: 0; top: 0; bottom: 0; width: 27px; background: #202022; padding: 436px 4px 0 7px; }
    .thumb { height: 76px; border-radius: 8px; background: #6c6c6f; }
    .toast { position: absolute; left: 1571px; top: 101px; width: 600px; height: 100px; display: flex; align-items: center; padding-left: 32px; border: 2px solid #1d3a70; border-radius: 8px; background: #102a60; font-size: 29px; line-height: 36px; }
    .info { width: 30px; height: 30px; flex: none; margin-right: 18px; }
    .msg { flex: 1; border-left: 2px solid #fff; white-space: nowrap; }
    .undo { width: 138px; height: 64px; border: 2px solid #2fd3f5; border-radius: 8px; background: #1c386c; font-weight: 700; font-size: 26px; }
    .dismiss { width: 96px; height: 64px; }
    .pop { position: absolute; right: 380px; top: 71px; }
  `];

  private lines(items: Line[]) {
    return items.map((l) => html`<span class="line">${l}</span>`);
  }

  render() {
    const btn = (name: string, label: string, cls = "") => html`<button class="btn ${cls}" aria-label=${label}>${icon(name)}</button>`;
    return html`
      <div class="bar">
        <div class="part left">
          ${btn("panel", "Toggle sidebar", "on first")}
          ${btn("up", "Previous page", "slim")}<span class="rule"></span>${btn("down", "Next page", "slim")}
          <input class="page" aria-label="Page" value="3">
          <span class="count">of 9</span>
        </div>
        <div class="part middle">
          ${btn("minus", "Zoom out", "slim")}<span class="rule"></span>${btn("plus", "Zoom in", "slim")}
          <span class="zoom"><select aria-label="Zoom"><option>200%</option></select>${icon("caret")}</span>
        </div>
        <div class="part right">
          ${btn("sign", "Add signature")}${btn("highlighter", "Highlight", "on")}${btn("text", "Text")}${btn("draw", "Draw")}${btn("image", "Add image")}
          <span class="rule tall"></span>
          ${btn("print", "Print")}${btn("save", "Save")}
          <span class="rule tall"></span>
          ${btn("more", "Tools")}
        </div>
      </div>
      <div class="body">
        <aside class="side">
          <div class="views">
            ${btn("thumbs", "Thumbnails")}${btn("outline", "Outline", "on")}${btn("clip", "Attachments", "dim")}${btn("layers", "Layers", "dim")}
            <span class="rule"></span>${btn("locate", "Current outline item")}
          </div>
          <ul class="tree">
            ${outline.map((o) => html`
              <li class="node" style="--level:${o.level}">
                ${o.open ? html`<button class="twist" aria-label="Collapse"><svg viewBox="0 0 18 14" aria-hidden="true"><path d="M1 0h16L9 13z"/></svg></button>` : html`<span class="twist"></span>`}
                <a href="#${o.text}">${o.text}</a>
              </li>`)}
          </ul>
        </aside>
        <main class="desk">
          <article class="sheet">
            <div class="caption"><b>Fig. 1.</b><span>patrol system architecture.</span></div>
            <p>${this.lines(related)}</p>
            <p class="indent">${this.lines(video)}</p>
            <h2><span>3.</span><span>UAV patrol system</span></h2>
            <h3><span>3.1.</span><span>System architecture</span></h3>
            <p class="indent">${this.lines(architecture)}</p>
            <h3><span>3.2.</span><span>Image stitching</span></h3>
            <p class="indent">${this.lines(stitching)}</p>
            <h3><span>3.3.</span><span>Motion ghost elimination</span></h3>
          </article>
          <div class="track"><div class="thumb"></div></div>
        </main>
      </div>
      <div class="toast" role="status">
        <svg class="info" viewBox="0 0 30 30" aria-hidden="true"><circle cx="15" cy="15" r="15" fill="#6f9cf0"/><path d="M15 13v9" stroke="#102a60" stroke-width="3" stroke-linecap="round"/><circle cx="15" cy="8" r="1.900" fill="#102a60"/></svg>
        <span class="msg">Highlight removed</span>
        <button class="undo">Undo</button>
        <button class="dismiss" aria-label="Dismiss">${icon("close")}</button>
      </div>
      <highlight-panel class="pop"></highlight-panel>`;
  }
}

const tile = (fill: string) => svg`<rect x=".5" y=".5" width="77" height="77" rx="18" fill=${fill}/>`;
const ticks = (n: number, r1: number, r2: number) => Array.from({ length: n }, (_, i) => {
  const a = (i / n) * Math.PI * 2;
  return `M${(39 + r1 * Math.cos(a)).toFixed(2)} ${(39 + r1 * Math.sin(a)).toFixed(2)}L${(39 + r2 * Math.cos(a)).toFixed(2)} ${(39 + r2 * Math.sin(a)).toFixed(2)}`;
}).join("");
const padColours = ["#5fdc55", "#f7b92f", "#ee8a2a", "#dc2a25", "#8f979b", "#f43d58", "#9140c0", "#2b96f3", "#43c29a"];

interface App { name: string; art: SVGTemplateResult; running?: boolean; badge?: string; rule?: boolean }
const apps: App[] = [
  { name: "Finder", running: true, art: svg`
    <defs><linearGradient id="fb" x2="0" y2="1"><stop stop-color="#37c3f8"/><stop offset="1" stop-color="#2b63e8"/></linearGradient><linearGradient id="fw" x2="0" y2="1"><stop stop-color="#f1f0f2"/><stop offset="1" stop-color="#c9d4e2"/></linearGradient></defs>
    ${tile("url(#fb)")}<path d="M43 .5H60a17.500 17.500 0 0 1 17.500 17.500V60A17.500 17.500 0 0 1 60 77.500H49Q45 62 45 46H33.500Q34 22 43 .5z" fill="url(#fw)"/>
    <path d="M21 24v5M57 24v5" stroke="#20222a" stroke-width="3.600" stroke-linecap="round"/><path d="M16.500 53Q39 71 62 53" fill="none" stroke="#1c1e26" stroke-width="2.400" stroke-linecap="round"/>` },
  { name: "Launchpad", art: svg`${tile("#b1b1b1")}${padColours.map((c, i) => svg`<rect x=${13 + (i % 3) * 19} y=${13 + Math.floor(i / 3) * 19} width="14" height="14" rx="3" fill=${c}/>`)}` },
  { name: "Safari", running: true, art: svg`
    <defs><linearGradient id="sf" x2="0" y2="1"><stop stop-color="#3aa4ee"/><stop offset="1" stop-color="#2a62dd"/></linearGradient><linearGradient id="sw" x2="0" y2="1"><stop stop-color="#fff"/><stop offset="1" stop-color="#cfcfcf"/></linearGradient></defs>
    ${tile("url(#sw)")}<circle cx="39" cy="39" r="33.500" fill="url(#sf)"/><path d=${ticks(60, 28, 31)} stroke="#cfe4fb" stroke-width="1.200"/>
    <path d="M62.500 19 36 36l6 6z" fill="#e8453c"/><path d="M16.500 59 36 36l6 6z" fill="#efefef"/>` },
  { name: "Firefox", running: true, art: svg`
    <defs><linearGradient id="ff" x1=".8" y1="0" x2=".35" y2="1"><stop stop-color="#fff05a"/><stop offset=".35" stop-color="#ffb02e"/><stop offset=".65" stop-color="#ff5b35"/><stop offset="1" stop-color="#e5177b"/></linearGradient><radialGradient id="fo" cx=".6" cy=".2" r=".9"><stop stop-color="#a838e0"/><stop offset="1" stop-color="#5340c9"/></radialGradient></defs>
    ${tile("#1f1433")}<path d="M17 15C13 19 11 24 10 28 5 34 5 40 6 44 9 61 23 72 39 72 58 72 72 58 72 40 72 31 69 24 65 20L66 27C64 21 58 14 54 12 50 10 49 7 48 3 41 9 36 18 37 26 33 25 30 26 27 27 28 24 27 20 28 17 25 18 22 21 21 24 18 22 17 18 17 15z" fill="url(#ff)"/>
    <circle cx="38" cy="38" r="15.500" fill="url(#fo)"/><path d="M14 33q7-3 13-1 6-2 11 2-3 4-9 4-6 3-5 10Q16 43 14 33z" fill="#ffa22e"/><path d="M48 3q-8 7-10 19 9 0 13 7-1-4-4-7 9 4 10 14 1 10-6 17 12-4 15-15 1-10-3-16-11-9-15-19z" fill="#ffd64a" opacity=".85"/>` },
  { name: "Calendar", running: true, art: svg`
    ${tile("#f6f5f3")}<path d="M.5 24V18.500A18 18 0 0 1 18.500.5h41a18 18 0 0 1 18 18V24z" fill="#ed4f47"/>
    <text x="39" y="18.500" text-anchor="middle" font-size="15" font-weight="600" fill="#fff">JUL</text><text x="39" y="66" text-anchor="middle" font-size="48" font-weight="300" fill="#1e1e1e">2</text>` },
  { name: "Reminders", badge: "1", art: svg`
    ${tile("#f8f7f6")}<path d="M28.500 19.500H69M28.500 39H69M28.500 58.500H69" stroke="#b4b4b4" stroke-width="1.600"/>
    ${["#2c70f0", "#f03c36", "#f0922c"].map((c, i) => svg`<circle cx="15" cy=${19.5 + i * 19.5} r="6" fill="none" stroke=${c} stroke-width="1.300"/><circle cx="15" cy=${19.5 + i * 19.5} r="4.200" fill=${c}/>`)}` },
  { name: "Notes", running: true, art: svg`
    ${tile("#efede8")}<path d="M.5 20.500v-2A18 18 0 0 1 18.500.5h41a18 18 0 0 1 18 18v2z" fill="#fccb3d"/>
    <path d="M.5 20.500h77" stroke="#a9a59d" stroke-width="1.500"/><path d="M2 24h75" stroke="#9c9a95" stroke-width="1.300" stroke-dasharray="1.300 1.700"/><path d="M.5 39h77M.5 58.500h77" stroke="#cfcdc9" stroke-width="1.500"/>` },
  { name: "App Store", art: svg`
    <defs><linearGradient id="as" x2="0" y2="1"><stop stop-color="#2db2f5"/><stop offset="1" stop-color="#2353d6"/></linearGradient></defs>
    ${tile("url(#as)")}<g stroke="#fff" stroke-width="6.500" stroke-linecap="round"><path d="M42.500 18 25 48M36 18l24 41M15 48h22M51 48h11M21 55l-2 4"/></g>` },
  { name: "Settings", badge: "1", art: svg`
    <defs><linearGradient id="st" x2="0" y2="1"><stop stop-color="#c9d5dc"/><stop offset="1" stop-color="#858381"/></linearGradient></defs>
    ${tile("url(#st)")}<circle cx="39" cy="39" r="34" fill="#2f2f30"/><circle cx="39" cy="39" r="27" fill="#505152" stroke="#a9abac" stroke-width="4"/><path d=${ticks(60, 29, 33)} stroke="#a9abac" stroke-width="1.600"/>
    <circle cx="39" cy="39" r="16" fill="#353637" stroke="#8a8c8d" stroke-width="2.500"/><path d=${ticks(36, 17, 20)} stroke="#8a8c8d" stroke-width="1.500"/><path d="M39 39h27M39 39 25.500 16M39 39 25.500 62" stroke="#b5b7b8" stroke-width="3.500"/><circle cx="39" cy="39" r="4" fill="#8a8c8d"/>` },
  { name: "ChatGPT", running: true, rule: true, art: svg`${tile("#eef1f8")}<path transform="translate(10.500 10.500) scale(2.380)" fill="#22252b" d=${OPENAI}/>` },
  { name: "WhatsApp", running: true, art: svg`
    <defs><linearGradient id="wa" x2="0" y2="1"><stop stop-color="#62f277"/><stop offset="1" stop-color="#2ab73d"/></linearGradient></defs>
    ${tile("url(#wa)")}<path transform="translate(9.500 9) scale(2.500)" fill="#fff" d=${WHATSAPP}/>` },
  { name: "Preview", running: true, art: svg`
    <defs><linearGradient id="pv" x2="0" y2="1"><stop stop-color="#7da8ea"/><stop offset="1" stop-color="#b5cdf3"/></linearGradient></defs>
    ${tile("#f0eeee")}<rect x="6.500" y="6.500" width="65" height="65" rx="11" fill="url(#pv)"/><path d="M6.500 42h65v20q0 9.500-10 9.500h-45q-10 0-10-9.500z" fill="#25447f"/><path d="M6.500 57q12-5 22 0t18-4v18.500h-30q-10 0-10-9.500z" fill="#c7d6e6"/><path d="M6.500 63q9-3 16 3l10 5.500h-16q-8 0-10-8.500z" fill="#7a614f"/>
    <path d="M43 54h30l7 22q1 6-7 6H42q-8 0-7-6z" fill="#c7cacc" opacity=".9"/><path d="M44 62h26l4 10H40z" fill="#84898d"/><path d="M39 75h34l3 5H36z" fill="#f2f2f2"/><rect x="40" y="38" width="35" height="17" rx="5" fill="#111"/><ellipse cx="57.500" cy="41" rx="15" ry="2.500" fill="#3d3d3d"/>` },
  { name: "Documents", rule: true, art: svg`
    <g transform="translate(4 0)"><path d="M9-7h33v92H9z" fill="#d2d2d2"/><path d="M42-2h17v10H42z" fill="#dadada"/><path d="M4 3h60v80H4z" fill="#6b6b6b"/><path d="M9 2h57v82H9z" fill="#f4f4f4"/><path d="M43-7 45 12l20 14-6-22z" fill="#fff" stroke="#c9c9c9"/>
    <path d="M9 9h22M20 17h24M20 21h24M20 25h22" stroke="#222" stroke-width="2"/><path d="M20 30h40M20 33h40M20 36h40M20 39h40M20 42h40M20 45h40M20 48h28M20 52h40M20 57h40M20 60h40M20 63h40M20 66h40M20 69h40M20 75h40M20 78h40M10 82h10M28 82h14" stroke="#6f6f6f" stroke-width="1.200"/></g>` },
  { name: "Bin", art: svg`
    <defs><linearGradient id="bn"><stop stop-color="#6f7579"/><stop offset=".5" stop-color="#8d9396"/><stop offset="1" stop-color="#5a6064"/></linearGradient><linearGradient id="bs" x2="0" y2="1"><stop stop-color="#000" stop-opacity="0"/><stop offset=".5" stop-color="#000" stop-opacity=".4"/><stop offset="1" stop-color="#000" stop-opacity="0"/></linearGradient></defs>
    <path d="M6 3 64 3q7 0 6 6L64 74q-1 8-25 8T14 74L5 8z" fill="url(#bn)"/><path d="M6 3 64 3q7 0 6 6L64 74q-1 8-25 8T14 74L5 8z" fill="url(#bs)"/><ellipse cx="38.500" cy="5" rx="34" ry="8" fill="#43494c"/>
    <path d="M10 6l6-9 9 3 3-6 8 4 9-4 4 7 10-4 4 10-10 6-14-2-12 3z" fill="#e9e9e7"/><path d="m16 2 8 1-3 5zM42-3l8 5-7 6z" fill="#5f5f5d"/><path d="M26 1l7-2 2 6z" fill="#2ebcd8"/><path d="m34 4 4 6h-6z" fill="#d2572b"/><path d="m48 0 3 8-8 3z" fill="#3f6da8"/><path d="M22 22q12 10 30 0l-8 10H30z" fill="#a5abad" opacity=".5"/>` },
];

@customElement("app-dock")
export class AppDock extends LitElement {
  static styles = [base, css`
    :host { display: flex; align-items: flex-start; gap: 26px; height: 126px; margin: 2px auto 10px; padding: 17px 17px 0; border: 2px solid #3c3c3b; border-radius: 36px; background: #141412; box-shadow: 0 0 32px rgba(0, 0, 0, .4); position: relative; }
    .app { position: relative; display: flex; flex-direction: column; align-items: center; width: 78px; gap: 18px; }
    .art { width: 78px; height: 78px; display: block; overflow: visible; font-family: Inter, sans-serif; }
    .dot { width: 8px; height: 8px; border-radius: 50%; background: #8b8b8a; }
    .badge { position: absolute; right: -12px; top: -10px; width: 38px; height: 38px; border-radius: 50%; background: #ea3a30; color: #fff; font-size: 22px; line-height: 38px; text-align: center; }
    .rule { width: 2px; height: 94px; margin: -3px 9px 0; background: #454544; }
  `];
  render() {
    return apps.map((a) => html`
      ${a.rule ? html`<span class="rule"></span>` : nothing}
      <button class="app" aria-label=${a.name}>
        <svg class="art" viewBox="0 0 78 78" aria-hidden="true">${a.art}</svg>
        ${a.running ? html`<span class="dot"></span>` : nothing}
        ${a.badge ? html`<span class="badge">${a.badge}</span>` : nothing}
      </button>`);
  }
}

@customElement("app-root")
export class AppRoot extends LitElement {
  static styles = [base, css`
    :host { display: flex; flex-direction: column; height: 100vh; overflow: hidden; background: #000; font-family: Inter, "Liberation Sans", sans-serif; position: relative; }
    .window { flex: 1; min-height: 0; display: flex; flex-direction: column; border: 2px solid #58585c; border-top-color: #68686c; border-radius: 22px; overflow: hidden; background: #26252c; }
    .content { flex: 1; min-height: 0; display: flex; }
    .rail { width: 96px; flex: none; display: flex; flex-direction: column; align-items: center; gap: 6px; padding: 12px 0 10px; color: #fbfbfe; }
    .rail button { width: 64px; height: 64px; }
    .rail .last { margin-top: auto; }
    .flare { position: absolute; left: 78px; bottom: 0; width: 11px; height: 138px; background: linear-gradient(#5c2418, #f4583a 65%); }
  `];
  render() {
    return html`
      <menu-bar></menu-bar>
      <div class="window">
        <browser-chrome></browser-chrome>
        <div class="content">
          <div class="rail">
            <button aria-label="Chatbot">${icon("openai")}</button>
            <button aria-label="Synced tabs">${icon("devices")}</button>
            <button aria-label="History">${icon("clock")}</button>
            <button class="last" aria-label="Customise sidebar">${icon("gear")}</button>
          </div>
          <pdf-viewer></pdf-viewer>
        </div>
      </div>
      <div class="flare"></div>
      <app-dock></app-dock>`;
  }
}
